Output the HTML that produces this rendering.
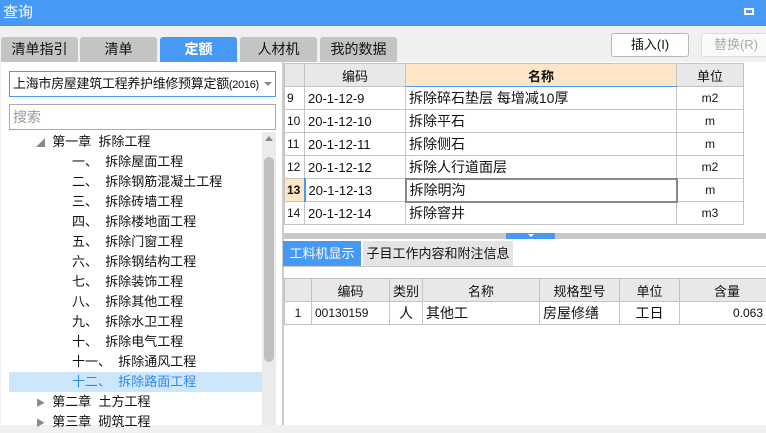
<html><head><style>
body{margin:0;width:766px;height:425px;overflow:hidden;background:#f0f0f0;font-family:"Liberation Sans","Noto Sans CJK SC",sans-serif;font-size:13px;color:#111;position:relative}
div{box-sizing:border-box;white-space:nowrap}
.a{position:absolute}
.tab{position:absolute;top:37px;height:25px;width:77px;background:#c4c4c4;border-radius:3px 3px 0 0;text-align:center;line-height:25px;font-size:14px}
.tr{position:absolute;left:0;height:20px;line-height:20px;font-size:13px;white-space:pre}
table{border-collapse:collapse;position:absolute;table-layout:fixed}
td{border:1px solid #c4c4c4;padding:0 3px;height:23px;white-space:nowrap;overflow:hidden;font-size:13px}
</style></head><body>
<div class="a" style="left:0;top:0;width:766px;height:26px;background:#4799f6;color:#fff;font-size:15px;line-height:25px;padding-left:3px">查询</div>
<div class="a" style="left:744px;top:8px;width:10px;height:7px;border:2px solid #fff"></div>
<div class="tab" style="left:1px">清单指引</div>
<div class="tab" style="left:80px">清单</div>
<div class="tab" style="left:160px;background:#4799f6;color:#fff;font-weight:bold">定额</div>
<div class="tab" style="left:240px">人材机</div>
<div class="tab" style="left:320px">我的数据</div>
<div class="a" style="left:611px;top:33px;width:78px;height:24px;background:#fff;border:1px solid #b8b8b8;border-radius:3px;text-align:center;line-height:22px">插入(I)</div>
<div class="a" style="left:701px;top:33px;width:70px;height:24px;background:#fafafa;border:1px solid #dcdcdc;border-radius:3px;text-align:center;line-height:22px;color:#aaa">替换(R)</div>
<div class="a" style="left:1px;top:62px;width:281px;height:363px;background:#fff"></div>
<div class="a" style="left:9px;top:71px;width:267px;height:26px;border:1px solid #4799f6;background:#fff;line-height:24px;padding-left:3px;font-size:13px;letter-spacing:-.3px;overflow:hidden">上海市房屋建筑工程养护维修预算定额<span style="font-size:11px">(2016)</span></div>
<div class="a" style="left:264px;top:82px;border:4px solid transparent;border-top:4px solid #888"></div>
<div class="a" style="left:9px;top:104px;width:267px;height:26px;border:1px solid #aaa;background:#fff;line-height:24px;padding-left:3px;color:#999;font-size:14px">搜索</div>
<div class="a" style="left:9px;top:372px;width:253px;height:20px;background:#cce6fc"></div>
<div class="a" style="left:0;top:132px;width:262px">
<div class="tr" style="top:0;left:36px"><span style="color:#888;font-size:9px">◢</span>  第一章  拆除工程</div>
<div class="tr" style="top:20px;left:72px">一、  拆除屋面工程</div>
<div class="tr" style="top:40px;left:72px">二、  拆除钢筋混凝土工程</div>
<div class="tr" style="top:60px;left:72px">三、  拆除砖墙工程</div>
<div class="tr" style="top:80px;left:72px">四、  拆除楼地面工程</div>
<div class="tr" style="top:100px;left:72px">五、  拆除门窗工程</div>
<div class="tr" style="top:120px;left:72px">六、  拆除钢结构工程</div>
<div class="tr" style="top:140px;left:72px">七、  拆除装饰工程</div>
<div class="tr" style="top:160px;left:72px">八、  拆除其他工程</div>
<div class="tr" style="top:180px;left:72px">九、  拆除水卫工程</div>
<div class="tr" style="top:200px;left:72px">十、  拆除电气工程</div>
<div class="tr" style="top:220px;left:72px">十一、  拆除通风工程</div>
<div class="tr" style="top:240px;left:72px;color:#3388ee">十二、  拆除路面工程</div>
<div class="tr" style="top:260px;left:36px"><span style="color:#888;font-size:9px">▶</span>  第二章  土方工程</div>
<div class="tr" style="top:280px;left:36px"><span style="color:#888;font-size:9px">▶</span>  第三章  砌筑工程</div>
</div>
<div class="a" style="left:262px;top:132px;width:14px;height:293px;background:#ebebeb"></div>
<div class="a" style="left:265px;top:136px;border:4px solid transparent;border-bottom:5px solid #888;border-top:0"></div>
<div class="a" style="left:264px;top:157px;width:10px;height:205px;background:#c0c0c0;border-radius:5px"></div>
<div class="a" style="left:282px;top:62px;width:2px;height:363px;background:#ccc"></div>
<div class="a" style="left:284px;top:62px;width:482px;height:171px;background:#fff"></div>
<table style="left:284px;top:63px;width:459px">
<colgroup><col style="width:20px"><col style="width:101px"><col style="width:271px"><col style="width:67px"></colgroup>
<tr style="background:#e8e8e8;text-align:center;font-size:14px"><td></td><td>编码</td><td style="background:#fde6c8;font-weight:bold;border-bottom:1px solid #4799f6">名称</td><td>单位</td></tr>
<tr><td style="padding:0 2px;font-size:12px">9</td><td>20-1-12-9</td><td style="font-size:14px">拆除碎石垫层 每增减10厚</td><td style="text-align:center;font-size:12px">m2</td></tr>
<tr><td style="padding:0 2px;font-size:12px">10</td><td>20-1-12-10</td><td style="font-size:14px">拆除平石</td><td style="text-align:center;font-size:12px">m</td></tr>
<tr><td style="padding:0 2px;font-size:12px">11</td><td>20-1-12-11</td><td style="font-size:14px">拆除侧石</td><td style="text-align:center;font-size:12px">m</td></tr>
<tr><td style="padding:0 2px;font-size:12px">12</td><td>20-1-12-12</td><td style="font-size:14px;border-bottom:2px solid #888">拆除人行道面层</td><td style="text-align:center;font-size:12px">m2</td></tr>
<tr><td style="padding:0 2px;font-size:12px;background:#fde6c8;font-weight:bold;border-right:2px solid #4799f6">13</td><td>20-1-12-13</td><td style="font-size:14px;border:2px solid #888">拆除明沟</td><td style="text-align:center;font-size:12px">m</td></tr>
<tr><td style="padding:0 2px;font-size:12px">14</td><td>20-1-12-14</td><td style="font-size:14px">拆除窨井</td><td style="text-align:center;font-size:12px">m3</td></tr>
</table>
<div class="a" style="left:284px;top:233px;width:482px;height:6px;background:#c8c8c8"></div>
<div class="a" style="left:506px;top:233px;width:49px;height:6px;background:#4799f6"></div>
<div class="a" style="left:528px;top:234px;border:3px solid transparent;border-top:3px solid #fff"></div>
<div class="a" style="left:284px;top:239px;width:482px;height:186px;background:#fff"></div>
<div class="a" style="left:283px;top:241px;width:78px;height:25px;background:#4799f6;color:#fff;font-size:13px;text-align:center;line-height:25px">工料机显示</div>
<div class="a" style="left:363px;top:241px;width:150px;height:25px;background:#e4e4e4;font-size:13px;text-align:center;line-height:25px;overflow:hidden">子目工作内容和附注信息</div>
<div class="a" style="left:284px;top:266px;width:482px;height:1px;background:#ccc"></div>
<table style="left:284px;top:278px;width:490px">
<colgroup><col style="width:27px"><col style="width:78px"><col style="width:33px"><col style="width:117px"><col style="width:80px"><col style="width:60px"><col style="width:95px"></colgroup>
<tr style="background:#e8e8e8;text-align:center;font-size:14px"><td></td><td>编码</td><td>类别</td><td>名称</td><td>规格型号</td><td>单位</td><td>含量</td></tr>
<tr><td style="text-align:center;font-size:12px">1</td><td style="font-size:12px">00130159</td><td style="text-align:center;font-size:14px">人</td><td style="font-size:14px">其他工</td><td style="font-size:14px">房屋修缮</td><td style="text-align:center;font-size:14px">工日</td><td style="text-align:right;padding-right:11px;font-size:12px">0.063</td></tr>
</table>
</body></html>
